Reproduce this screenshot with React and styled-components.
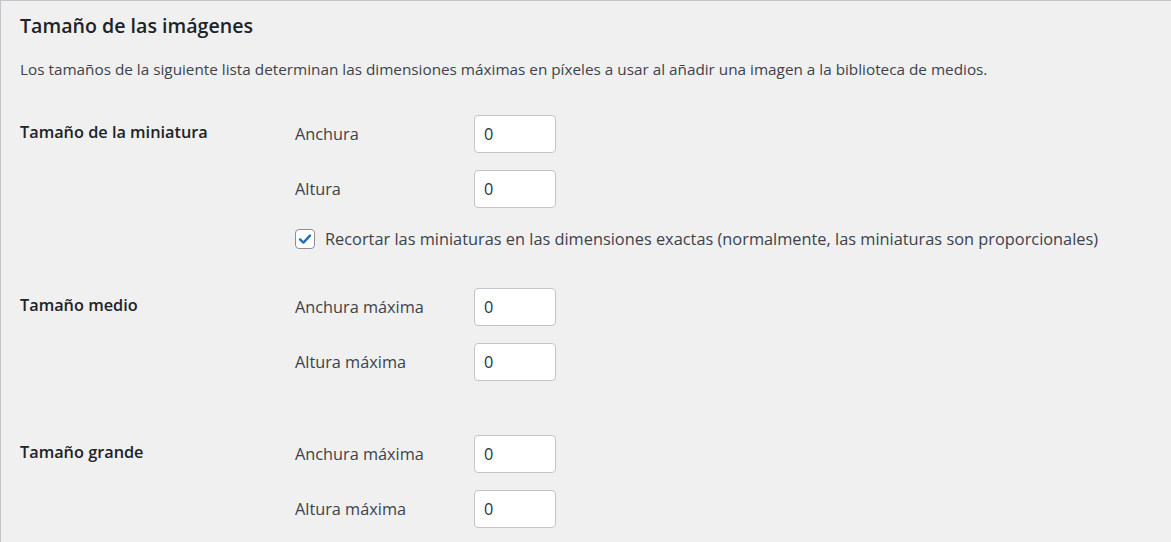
import React from "react";
import styled, { createGlobalStyle } from "styled-components";

const Global = createGlobalStyle`
  html, body { margin: 0; padding: 0; background: #f0f0f1; }
  body { font-family: "Open Sans", "Noto Sans", sans-serif; color: #3c434a; }
  * { box-sizing: border-box; }
`;

const Page = styled.div`
  min-height: 100vh;
  border-top: 1px solid #c3c4c7;
  border-left: 1px solid #c3c4c7;
  background: #f0f0f1;
  padding: 12px 20px 0 19px;
`;

const Title = styled.h2`
  margin: 0;
  font-size: 19.6px;
  line-height: 25px;
  font-weight: 600;
  color: #1d2327;
`;

const Description = styled.p`
  margin: 20px 0 0;
  font-size: 15.3px;
  line-height: 22px;
  color: #3c434a;
`;

const Table = styled.div`
  margin-top: 35px;
  display: flex;
  flex-direction: column;
`;

const Row = styled.div`
  display: grid;
  grid-template-columns: 275px 1fr;
  padding-bottom: ${(p) => p.$after}px;
`;

const RowHead = styled.div`
  padding-top: 5px;
  font-size: 16.3px;
  line-height: 24px;
  font-weight: 600;
  color: #1d2327;
`;

const Fields = styled.div`
  display: flex;
  flex-direction: column;
  gap: 17px;
`;

const Field = styled.div`
  display: flex;
  align-items: center;
  height: 38px;
`;

const FieldLabel = styled.label`
  width: 179px;
  font-size: 16.3px;
  line-height: 24px;
  color: #3c434a;
`;

const NumberInput = styled.input`
  width: 82px;
  height: 38px;
  margin: 0;
  padding: 0 9px;
  border: 1px solid #c3c4c7;
  border-radius: 4px;
  background: #fff;
  font-family: inherit;
  font-size: 16.3px;
  color: #2c3338;
  outline: none;
`;

const CheckLine = styled.label`
  display: flex;
  align-items: center;
  gap: 10px;
  height: 20px;
  margin-top: 4px;
  font-size: 16.35px;
  line-height: 24px;
  color: #3c434a;
`;

const CheckBox = styled.span`
  flex: none;
  width: 20px;
  height: 20px;
  border: 1px solid #8c8f94;
  border-radius: 4px;
  background: #fff;
  display: flex;
  align-items: center;
  justify-content: center;
`;

const Check = () => (
  <svg width="16" height="16" viewBox="0 0 16 16">
    <path d="M3 8.4 L6.4 11.6 L13 4.6" fill="none" stroke="#2271b1" strokeWidth="2.4" strokeLinecap="round" strokeLinejoin="round" />
  </svg>
);

const sections = [
  { title: "Tamaño de la miniatura", fields: ["Anchura", "Altura"], crop: true, after: 39 },
  { title: "Tamaño medio", fields: ["Anchura máxima", "Altura máxima"], after: 54 },
  { title: "Tamaño grande", fields: ["Anchura máxima", "Altura máxima"], after: 20 },
];

export default function App() {
  return (
    <>
      <Global />
      <Page>
        <Title>Tamaño de las imágenes</Title>
        <Description>
          Los tamaños de la siguiente lista determinan las dimensiones máximas en píxeles a usar al añadir una imagen a la biblioteca de medios.
        </Description>
        <Table>
          {sections.map((s, i) => (
            <Row key={i} $after={s.after}>
              <RowHead>{s.title}</RowHead>
              <Fields>
                {s.fields.map((f, j) => (
                  <Field key={j}>
                    <FieldLabel>{f}</FieldLabel>
                    <NumberInput type="text" defaultValue="0" />
                  </Field>
                ))}
                {s.crop && (
                  <CheckLine>
                    <CheckBox>
                      <Check />
                    </CheckBox>
                    Recortar las miniaturas en las dimensiones exactas (normalmente, las miniaturas son proporcionales)
                  </CheckLine>
                )}
              </Fields>
            </Row>
          ))}
        </Table>
      </Page>
    </>
  );
}
